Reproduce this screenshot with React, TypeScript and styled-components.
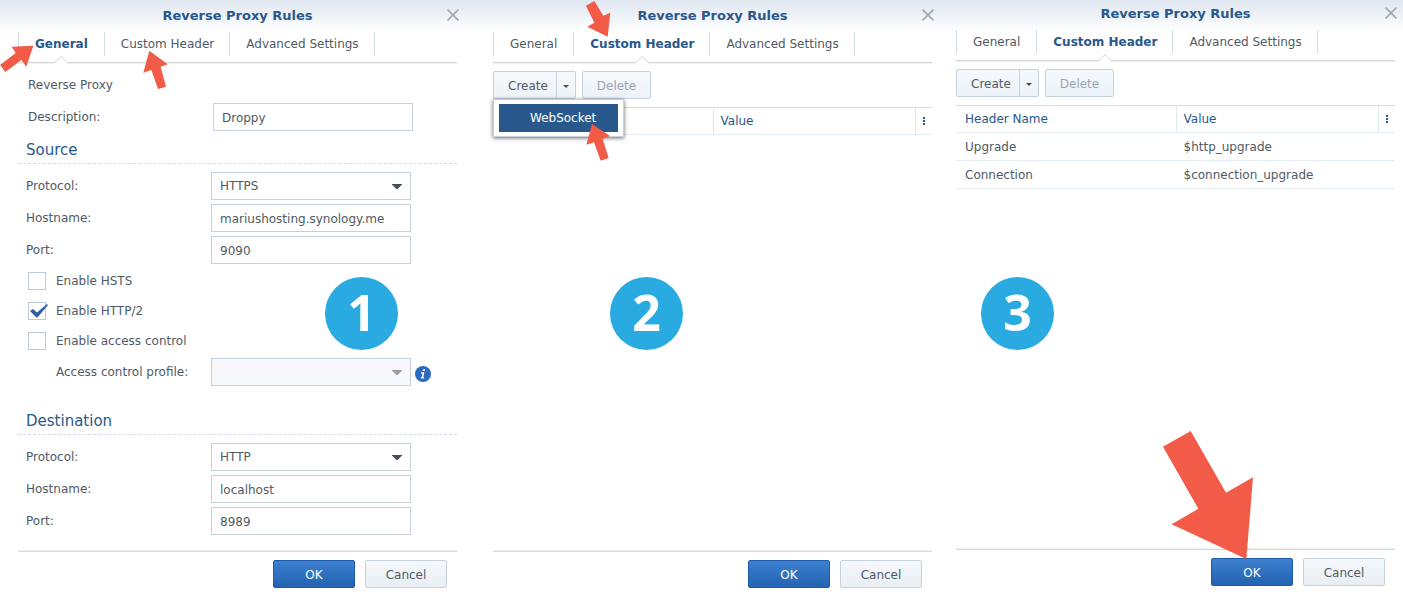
import React from "react";
import styled, { createGlobalStyle, css } from "styled-components";

const GlobalStyle = createGlobalStyle`
  *, *::before, *::after { box-sizing: border-box; }
  body { margin: 0; background: #fff; }
  body, button, input, select, table {
    font-family: Verdana, "DejaVu Sans", sans-serif;
    font-size: 12px;
    color: #505a64;
  }
`;

const Page = styled.main`
  display: grid;
  grid-template-columns: minmax(0, 475fr) minmax(0, 463fr) minmax(0, 465fr);
  min-height: 100vh;
`;

const Panel = styled.section<{ $gutter: number; $compact?: boolean }>`
  position: relative;
  display: flex;
  flex-direction: column;
  padding: 0 ${(p) => p.$gutter}px ${(p) => (p.$compact ? 11 : 9)}px 18px;
  background: linear-gradient(#dfe6f0, #fff 32px);
`;

const TitleBar = styled.header<{ $compact?: boolean }>`
  display: grid;
  grid-template-columns: 12px 1fr 12px;
  align-items: center;
  margin: 0 -2px;
  height: ${(p) => (p.$compact ? 26 : 30)}px;
  margin-bottom: ${(p) => (p.$compact ? 4 : 2)}px;
`;

const Title = styled.h1`
  grid-column: 2;
  margin: 0;
  font-size: 13px;
  font-weight: bold;
  text-align: center;
  color: #29588c;
`;

const CloseButton = styled.button`
  display: flex;
  padding: 0;
  border: 0;
  background: none;
  color: #a0a7ad;
`;

const TabBar = styled.nav`
  display: flex;
  height: 31px;
  border-bottom: 1px solid #d4d6d8;
  box-shadow: 0 1px 1px #eef0f2;
`;

const Tab = styled.button<{ $active?: boolean }>`
  position: relative;
  height: 24px;
  padding: 0 15px 0 16px;
  border: 0;
  border-left: 1px solid #d3dde9;
  background: none;
  white-space: nowrap;
  &:first-child { padding-right: 16px; }
  &:last-child { border-right: 1px solid #d3dde9; }
  ${(p) =>
    p.$active &&
    css`
      font-weight: bold;
      color: #29588c;
    `}
`;

const Notch = styled.svg`
  position: absolute;
  left: calc(50% - 7px);
  top: 24px;
`;

const Content = styled.div`
  flex: 1;
  padding-top: 8px;
`;

const Field = styled.div<{ $inset?: number }>`
  display: flex;
  align-items: center;
  height: 28px;
  margin-bottom: 4px;
  padding-left: ${(p) => p.$inset ?? 8}px;
`;

const Label = styled.label<{ $width?: number }>`
  flex: none;
  width: ${(p) => p.$width ?? 185}px;
  padding-bottom: 1px;
`;

const Input = styled.input`
  width: 200px;
  height: 28px;
  padding: 2px 8px 0;
  border: 1px solid #c6d1de;
  border-radius: 0;
  background: #fff;
  outline: none;
`;

const SelectBox = styled.div`
  position: relative;
  width: 200px;
`;

const Select = styled.select`
  appearance: none;
  display: block;
  width: 100%;
  height: 28px;
  padding: 0 8px;
  border: 1px solid #c6d1de;
  border-radius: 0;
  background: #fff;
  &:disabled { background: #f6f8fb; opacity: 1; }
`;

const SelectCaret = styled.svg`
  position: absolute;
  right: 9px;
  top: 12px;
  pointer-events: none;
`;

const SectionTitle = styled.h2<{ $spaced?: boolean }>`
  height: 29px;
  margin: ${(p) => (p.$spaced ? 20 : 0)}px 0 8px;
  padding-left: 8px;
  border-bottom: 1px dashed #d3dde9;
  font-size: 15px;
  font-weight: normal;
  line-height: 30px;
  color: #29588c;
`;

const Checks = styled.div`
  margin: -2px 0 2px;
`;

const CheckLabel = styled.label`
  display: flex;
  align-items: center;
  gap: 10px;
  height: 30px;
  padding-left: 10px;
`;

const CheckBox = styled.span`
  position: relative;
  width: 18px;
  height: 18px;
  svg { position: absolute; left: 2px; top: 1px; }
`;

const CheckInput = styled.input`
  appearance: none;
  display: block;
  width: 18px;
  height: 18px;
  margin: 0;
  border: 1px solid #bfc8d6;
  background: #fff;
`;

const InfoIcon = styled.svg`
  margin: 4px 0 0 4px;
`;

const Footer = styled.footer`
  display: flex;
  justify-content: flex-end;
  gap: 10px;
  padding: 8px 10px 0 0;
  border-top: 1px solid #d8dadc;
  box-shadow: 0 -1px 1px #eef0f2;
`;

const Button = styled.button<{ $primary?: boolean }>`
  width: 82px;
  height: 28px;
  padding: 2px 0 0;
  border: 1px solid ${(p) => (p.$primary ? "#1d5ba6" : "#c6d1de")};
  border-radius: 2px;
  background: ${(p) =>
    p.$primary ? "linear-gradient(#3c80cf, #2363b1)" : "linear-gradient(#f5f9fd, #e9eef3)"};
  color: ${(p) => (p.$primary ? "#fff" : "#505a64")};
`;

const Toolbar = styled.div`
  position: relative;
  display: flex;
  gap: 6px;
  margin-bottom: 8px;
`;

const SplitButton = styled.div`
  display: flex;
  width: 83px;
  height: 28px;
  border: 1px solid #c6d1de;
  border-radius: 2px;
  background: linear-gradient(#f5f9fd, #edf3f9);
`;

const SplitMain = styled.button`
  flex: 1;
  padding: 2px 0 0 6px;
  border: 0;
  background: none;
`;

const SplitCaret = styled.button`
  width: 19px;
  padding: 0;
  border: 0;
  border-left: 1px solid #c6d1de;
  background: none;
  svg { display: block; margin: 2px auto 0; }
`;

const DeleteButton = styled.button`
  width: 69px;
  height: 28px;
  padding: 2px 0 0;
  border: 1px solid #c6d1de;
  border-radius: 2px;
  background: linear-gradient(#f5f9fd, #edf3f9);
  &:disabled { color: #9ca4b3; }
`;

const Menu = styled.div`
  position: absolute;
  z-index: 1;
  left: 0;
  top: 28px;
  width: 131px;
  padding: 4px 5px;
  border: 1px solid #c6d1de;
  background: #fff;
  box-shadow: 0 1px 4px rgba(0, 0, 0, 0.6);
`;

const MenuItem = styled.button`
  display: block;
  width: 100%;
  height: 28px;
  padding: 0 0 0 31px;
  border: 0;
  background: #29588c;
  color: #fff;
  text-align: left;
`;

const Table = styled.table`
  width: 100%;
  table-layout: fixed;
  border-collapse: separate;
  border-spacing: 0;
  th, td {
    height: 28px;
    padding: 0 8px;
    border-bottom: 1px solid #e3ebf5;
    font-weight: normal;
    text-align: left;
  }
  th {
    border-top: 1px solid #d3dde9;
    color: #29588c;
  }
  th + th { border-left: 1px solid #dde7f3; padding-left: 7px; }
  th:first-child, td:first-child { padding-left: 9px; }
  th:nth-child(1) { width: 50%; }
  th:nth-child(3) { width: 17px; padding: 0 0 0 7px; }
`;

const Badge = styled.div<{ $left: number }>`
  position: absolute;
  left: ${(p) => p.$left}px;
  top: 277px;
  width: 73px;
  height: 73px;
  border-radius: 50%;
  background: #29abe2;
  color: #fff;
  font: 700 50px/71px "Open Sans", sans-serif;
  text-align: center;
`;

const Arrow = styled.svg<{ $left?: number; $top?: number; $right?: number; $bottom?: number }>`
  position: absolute;
  z-index: 2;
  left: ${(p) => (p.$left === undefined ? "auto" : `${p.$left}px`)};
  top: ${(p) => (p.$top === undefined ? "auto" : `${p.$top}px`)};
  right: ${(p) => (p.$right === undefined ? "auto" : `${p.$right}px`)};
  bottom: ${(p) => (p.$bottom === undefined ? "auto" : `${p.$bottom}px`)};
  fill: #f15b47;
  pointer-events: none;
`;

function Chrome({ compact }: { compact?: boolean }) {
  return (
    <TitleBar $compact={compact}>
      <Title>Reverse Proxy Rules</Title>
      <CloseButton aria-label="Close">
        <svg width="12" height="12" viewBox="0 0 12 12" stroke="currentColor" strokeWidth="1.6">
          <path d="M.6 .6L11.4 11.4M11.4 .6L.6 11.4" />
        </svg>
      </CloseButton>
    </TitleBar>
  );
}

const tabNames = ["General", "Custom Header", "Advanced Settings"];

function Tabs({ active }: { active: string }) {
  return (
    <TabBar>
      {tabNames.map((name) => (
        <Tab key={name} $active={name === active}>
          {name}
          {name === active && (
            <Notch width="14" height="8" viewBox="0 0 14 8">
              <path d="M.5 8V7L7 .5L13.5 7V8Z" fill="#fff" />
              <path d="M.5 6.8L7 .5L13.5 6.8" fill="none" stroke="#d4d6d8" />
            </Notch>
          )}
        </Tab>
      ))}
    </TabBar>
  );
}

function Actions() {
  return (
    <Footer>
      <Button $primary>OK</Button>
      <Button>Cancel</Button>
    </Footer>
  );
}

function DropDown({ id, value, disabled }: { id: string; value: string; disabled?: boolean }) {
  return (
    <SelectBox>
      <Select id={id} defaultValue={value} disabled={disabled}>
        <option>{value}</option>
      </Select>
      <SelectCaret width="10" height="5" viewBox="0 0 10 5" fill={disabled ? "#98a1ab" : "#46505c"}>
        <path d="M0 0H10V.6L5.6 5H4.4L0 .6Z" />
      </SelectCaret>
    </SelectBox>
  );
}

function Endpoint({ id, protocol, host, port }: { id: string; protocol: string; host: string; port: string }) {
  return (
    <>
      <Field>
        <Label htmlFor={`${id}-protocol`}>Protocol:</Label>
        <DropDown id={`${id}-protocol`} value={protocol} />
      </Field>
      <Field>
        <Label htmlFor={`${id}-host`}>Hostname:</Label>
        <Input id={`${id}-host`} defaultValue={host} />
      </Field>
      <Field>
        <Label htmlFor={`${id}-port`}>Port:</Label>
        <Input id={`${id}-port`} defaultValue={port} />
      </Field>
    </>
  );
}

function Check({ label, checked }: { label: string; checked?: boolean }) {
  return (
    <CheckLabel>
      <CheckBox>
        <CheckInput type="checkbox" defaultChecked={checked} />
        {checked && (
          <svg width="18" height="15" viewBox="0 0 18 15">
            <path d="M0 8L3 6L7 9.5L17 1L18 2L7.5 14.5H6.5Z" fill="#2b5f9f" />
          </svg>
        )}
      </CheckBox>
      {label}
    </CheckLabel>
  );
}

function HeaderTools({ open }: { open?: boolean }) {
  return (
    <Toolbar>
      <SplitButton>
        <SplitMain>Create</SplitMain>
        <SplitCaret aria-label="More create options">
          <svg width="6" height="3" viewBox="0 0 6 3" fill="#46505c">
            <path d="M0 0H6L3 3Z" />
          </svg>
        </SplitCaret>
      </SplitButton>
      <DeleteButton disabled>Delete</DeleteButton>
      {open && (
        <Menu role="menu">
          <MenuItem role="menuitem">WebSocket</MenuItem>
        </Menu>
      )}
    </Toolbar>
  );
}

function HeaderTable({ rows, covered }: { rows: string[][]; covered?: boolean }) {
  return (
    <Table>
      <thead>
        <tr>
          {covered ? <th aria-label="Header Name" /> : <th>Header Name</th>}
          <th>Value</th>
          <th aria-label="Columns">
            <svg width="2" height="8" viewBox="0 0 2 8" fill="#29588c">
              <path d="M0 0H2V2H0ZM0 3H2V5H0ZM0 6H2V8H0Z" />
            </svg>
          </th>
        </tr>
      </thead>
      <tbody>
        {rows.map(([name, value]) => (
          <tr key={name}>
            <td>{name}</td>
            <td colSpan={2}>{value}</td>
          </tr>
        ))}
      </tbody>
    </Table>
  );
}

export default function App() {
  return (
    <>
      <GlobalStyle />
      <Page>
        <Panel $gutter={18}>
          <Chrome />
          <Tabs active="General" />
          <Content>
            <Field $inset={10}>Reverse Proxy</Field>
            <Field $inset={10}>
              <Label htmlFor="description">Description:</Label>
              <Input id="description" defaultValue="Droppy" />
            </Field>
            <SectionTitle>Source</SectionTitle>
            <Endpoint id="source" protocol="HTTPS" host="mariushosting.synology.me" port="9090" />
            <Checks>
              <Check label="Enable HSTS" />
              <Check label="Enable HTTP/2" checked />
              <Check label="Enable access control" />
            </Checks>
            <Field $inset={38}>
              <Label htmlFor="profile" $width={155}>Access control profile:</Label>
              <DropDown id="profile" value="" disabled />
              <InfoIcon width="16" height="16" viewBox="0 0 16 16">
                <circle cx="8" cy="8" r="8" fill="#2a6abf" />
                <path d="M8 3.2H10.2L9.8 5H7.6ZM6 6.2H9.4L8.3 11.3H9.3L9 12.5H5.7L6 11.3H6.6L7.4 7.4H5.8Z" fill="#fff" />
              </InfoIcon>
            </Field>
            <SectionTitle $spaced>Destination</SectionTitle>
            <Endpoint id="destination" protocol="HTTP" host="localhost" port="8989" />
          </Content>
          <Actions />
          <Badge $left={325}>1</Badge>
          <Arrow $left={0} $top={45} width="34" height="28" viewBox="0 135 102 84">
            <path d="M100 137L35 140L47 159L0 195L16 216L64 180L79 200Z" />
          </Arrow>
          <Arrow $left={143} $top={50} width="25" height="40" viewBox="429 150 75 120">
            <path d="M448 152L503 193L482 200L498 260L474 267L454 210L430 218Z" />
          </Arrow>
        </Panel>

        <Panel $gutter={6}>
          <Chrome />
          <Tabs active="Custom Header" />
          <Content>
            <HeaderTools open />
            <HeaderTable rows={[]} covered />
          </Content>
          <Actions />
          <Badge $left={135}>2</Badge>
          <Arrow $left={111} $top={0} width="25" height="38" viewBox="348 0 75 114">
            <path d="M348 17L373 3L400 47L421 38L413 110L352 80L373 68Z" />
          </Arrow>
          <Arrow $left={111} $top={123} width="25" height="39" viewBox="348 369 75 117">
            <path d="M366 372L420 408L398 417L416 474L392 482L372 427L349 434Z" />
          </Arrow>
        </Panel>

        <Panel $gutter={8} $compact>
          <Chrome compact />
          <Tabs active="Custom Header" />
          <Content>
            <HeaderTools />
            <HeaderTable
              rows={[
                ["Upgrade", "$http_upgrade"],
                ["Connection", "$connection_upgrade"],
              ]}
            />
          </Content>
          <Actions />
          <Badge $left={43}>3</Badge>
          <Arrow $right={149} $bottom={37} width="92" height="130" viewBox="681 30 276 390">
            <path d="M684 80L767 33L873 218L954 172L934 417L710 313L790 266Z" />
          </Arrow>
        </Panel>
      </Page>
    </>
  );
}
